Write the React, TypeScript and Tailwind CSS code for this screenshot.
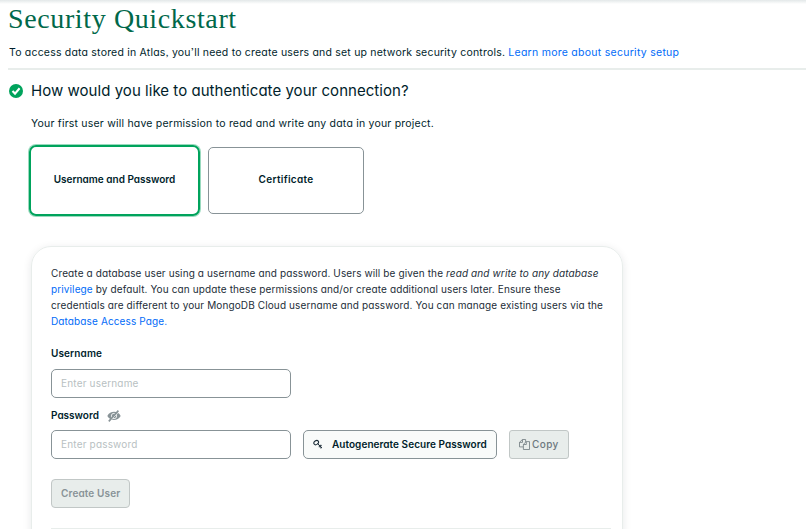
import type { ReactNode } from "react";

function Text({ children, className = "" }: { children: ReactNode; className?: string }) {
  return <span className={`whitespace-nowrap ${className}`}>{children}</span>;
}

function CheckCircle() {
  return (
    <svg className="h-[14px] w-[14px] shrink-0" viewBox="0 0 14 14">
      <circle cx="7" cy="7" r="7" fill="#00a35c" />
      <path d="M3.5 7.1 6 9.6l4.6-5.3" fill="none" stroke="#fff" strokeWidth="2.1" />
    </svg>
  );
}

function HiddenEye() {
  return (
    <svg className="h-3 w-[14px] shrink-0" viewBox="0 0 14 12">
      <path d="M0.3 6C3 0.7 10.8 0.2 13.7 6 10.8 11.2 3.4 11.6 0.3 6Z" fill="#889397" />
      <circle cx="7" cy="6" r="2.7" fill="none" stroke="#fff" strokeWidth="0.8" />
      <path d="M2.6 11.8 12 1.4" stroke="#fff" strokeWidth="1" />
      <path d="M1.8 11.4 11.4 0.6" stroke="#889397" strokeWidth="1.6" />
    </svg>
  );
}

function KeyIcon() {
  return (
    <svg className="h-[10px] w-[10px] shrink-0" viewBox="0 0 10 10" fill="none" stroke="#1c2d38">
      <ellipse cx="3.2" cy="3.6" rx="2.5" ry="1.9" transform="rotate(-35 3.2 3.6)" strokeWidth="1.1" />
      <path d="M4.6 4.6 9 8.9M6.3 6.3v2M7.9 7.9v1.6M7 6.3l1.7.1" strokeWidth="1" />
    </svg>
  );
}

function CopyIcon() {
  return (
    <svg className="h-[11px] w-[11px] shrink-0" viewBox="0 0 11 11" fill="none" stroke="#6d787e" strokeWidth="0.8">
      <path d="M4 7.9H.5V3.3L3.4.5h3.2v2.4M.6 3.4h2.9V.6" />
      <path d="M4.4 10.5V5.3l2.8-2.7h3.3v7.9ZM4.5 5.5h2.8V2.8" />
    </svg>
  );
}

export default function App() {
  return (
    <main className="h-[529px] w-[806px] overflow-hidden bg-white font-[Inter,sans-serif] text-[#001e2b] [font-feature-settings:'cv11','ss03']">
      <div className="h-1 bg-linear-to-b from-[#e3e8e9] to-white" />
      <header className="ml-2 h-[66px] border-b-2 border-[#e8edeb]">
        <h1 className="h-8 font-['Liberation_Serif',serif] text-[28px] leading-[29px] tracking-[0.62px] text-[#00684a]">
          <Text>Security Quickstart</Text>
        </h1>
        <p className="h-8 pt-[9px] pl-px text-[10.5px] leading-4">
          <Text className="tracking-[0.2px]">To access data stored in Atlas, you’ll need to create users and set up network security controls. </Text>
          <Text className="tracking-[0.27px] text-[#016bf8]">Learn more about security setup</Text>
        </p>
      </header>

      <section className="h-[176px] pl-[9px]">
        <h2 className="flex h-[41px] items-center gap-2 text-[15px] leading-5 tracking-[0.04px]">
          <CheckCircle />
          <Text>How would you like to authenticate your connection?</Text>
        </h2>
        <div className="pl-[22px]">
          <p className="h-[34px] pt-[5px] text-[10.5px] leading-4 tracking-[0.21px]">
            <Text>Your first user will have permission to read and write any data in your project.</Text>
          </p>
          <div className="-ml-[2px] flex items-center gap-2 text-[10px] font-semibold">
            <button className="h-[71px] w-[171px] rounded-[7px] border-2 border-[#00a35c] pb-[2px] ring-1 ring-[#00a35c]/40">
              <Text>Username and Password</Text>
            </button>
            <button className="h-[67px] w-[156px] rounded-[5px] border border-[#889397] pb-[2px]">
              <Text className="tracking-[0.3px]">Certificate</Text>
            </button>
          </div>
        </div>
      </section>

      <section className="ml-[31px] h-[310px] w-[592px] rounded-t-[20px] border border-[#e8edeb] pt-[18px] pl-[19px] shadow-[0_2px_8px_#001e2b1a]">
        <p className="h-20 text-[10px] leading-4 tracking-[0.12px] text-[#1c2d38]">
          <Text>Create a database user using a username and password. Users will be given the </Text>
          <Text className="italic">read and write to any database</Text>
          <br />
          <Text className="text-[#016bf8]">privilege</Text>
          <Text> by default. You can update these permissions and/or create additional users later. Ensure these</Text>
          <br />
          <Text>credentials are different to your MongoDB Cloud username and password. You can manage existing users via the</Text>
          <br />
          <Text className="text-[#016bf8]">Database Access Page.</Text>
        </p>

        <label className="block h-6 text-[10px] leading-4 font-semibold tracking-[0.12px]">
          <Text>Username</Text>
        </label>
        <div className="flex h-[29px] w-[240px] items-center rounded-[5px] border border-[#889397] pl-[9px] text-[10px] tracking-[0.18px] text-[#b8bfc2]">
          <Text>Enter username</Text>
        </div>

        <div className="flex h-8 items-center gap-2 pt-[3px] text-[10px] leading-4 font-semibold">
          <Text className="-mt-px">Password</Text>
          <HiddenEye />
        </div>
        <div className="flex h-[29px] gap-3 text-[10px]">
          <div className="flex w-[240px] items-center rounded-[5px] border border-[#889397] pl-[9px] tracking-[0.18px] text-[#b8bfc2]">
            <Text>Enter password</Text>
          </div>
          <button className="flex w-[194px] items-center gap-[9px] rounded-[5px] border border-[#889397] bg-[#f9fbfa] pb-px pl-[9px] font-semibold tracking-[0.05px]">
            <KeyIcon />
            <Text>Autogenerate Secure Password</Text>
          </button>
          <button className="flex w-[60px] items-center gap-[2px] rounded-[3px] border border-[#c1c7c6] bg-[#e8edeb] pl-[9px] font-medium tracking-[0.4px] text-[#6d787e]">
            <CopyIcon />
            <Text>Copy</Text>
          </button>
        </div>
        <button className="mt-5 flex h-[29px] w-[79px] items-center rounded-[4px] border border-[#c1c7c6] bg-[#e8edeb] pb-px pl-[9px] text-[10px] font-semibold tracking-[0.13px] text-[#889397]">
          <Text>Create User</Text>
        </button>
        <div className="mt-5 w-[560px] border-t border-[#e8edeb]" />
      </section>
    </main>
  );
}
